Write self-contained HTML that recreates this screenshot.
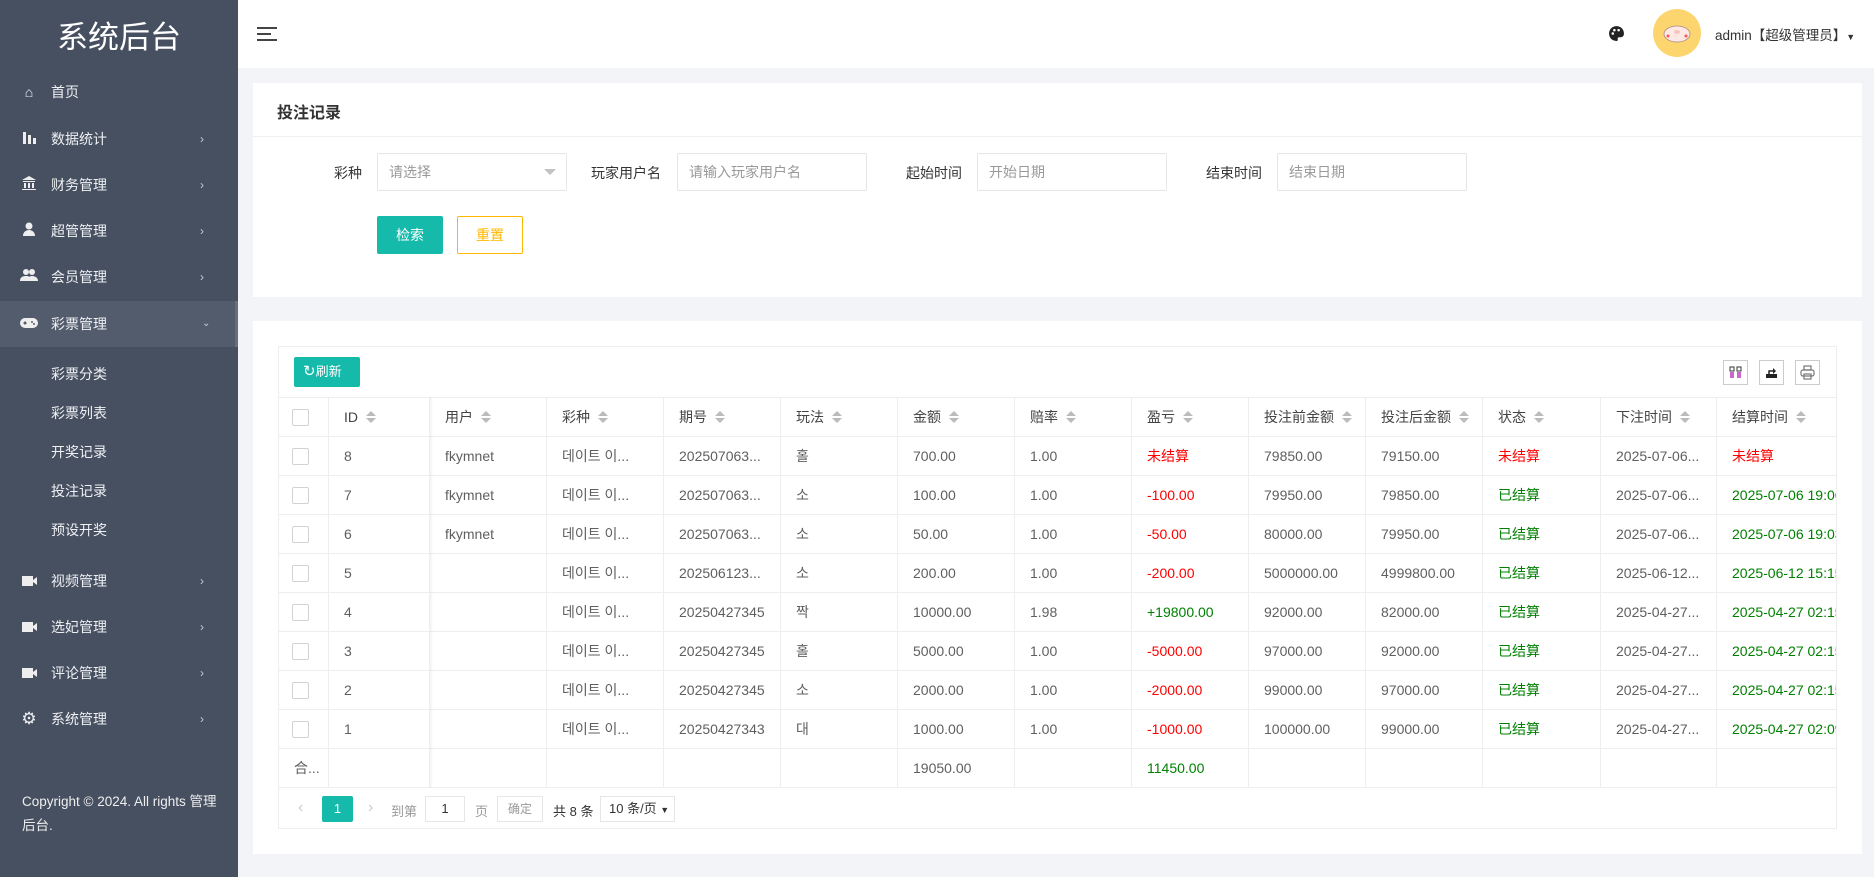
<!DOCTYPE html>
<html><head><meta charset="utf-8"><style>
*{box-sizing:border-box;margin:0;padding:0}
body{width:1874px;height:877px;overflow:hidden;background:#f3f4f8;font-family:"Liberation Sans","Noto Sans CJK SC","Noto Sans CJK KR",sans-serif;font-size:14px;color:#333;position:relative}
.side{position:absolute;left:0;top:0;width:238px;height:877px;background:#475061;color:#fff}
.logo{position:absolute;top:12px;left:0;width:238px;text-align:center;font-size:31px;color:#fff}
.mi{position:absolute;left:0;width:238px;height:46px;line-height:46px;font-size:14px;color:#eef0f3}
.mi .t{position:absolute;left:51px}
.mi .ic{position:absolute;left:19px;top:0;width:20px;text-align:center;font-size:14px}
.mi .ar{position:absolute;left:200px;font-size:12px;color:#ccc}
.act{background:#535c6c}
.sub{position:absolute;left:51px;font-size:14px;color:#eef0f3}
.copy{position:absolute;left:22px;top:790px;font-size:13.5px;line-height:24px;color:#eee;width:200px}
.top{position:absolute;left:238px;top:0;right:0;height:68px;background:#fff}
.card{position:absolute;background:#fff}
.lbl{position:absolute;font-size:14px;color:#333;text-align:right;width:90px;top:163px}
.inp{position:absolute;top:153px;height:38px;border:1px solid #e6e6e6;border-radius:2px;background:#fff;color:#999;font-size:14px;line-height:36px;padding-left:11px}
.btn{position:absolute;top:216px;height:38px;width:66px;border-radius:2px;text-align:center;line-height:38px;font-size:14px}
.tb{position:absolute;left:278px;top:346px;width:1559px;height:483px;border:1px solid #eee;overflow:hidden}
table{border-collapse:collapse;table-layout:fixed;position:absolute;left:-1px;top:50px;width:1598px}
td,th{border:1px solid #eee;height:39px;padding:0 15px;white-space:nowrap;overflow:hidden;font-size:14px;color:#5f5f5f;text-align:left;font-weight:normal}
th{color:#444}
.s{display:inline-block;width:10px;height:14px;vertical-align:middle;margin-left:8px;position:relative}
.s:before{content:"";position:absolute;left:0;top:0;border:5px solid transparent;border-bottom:5px solid #bbb;border-top:0}
.s:after{content:"";position:absolute;left:0;top:7px;border:5px solid transparent;border-top:5px solid #bbb;border-bottom:0}
.cb{display:inline-block;width:17px;height:17px;border:1px solid #d2d2d2;border-radius:2px;vertical-align:middle}
.r{color:#ff0000}.g{color:#008000}
.ib{position:absolute;top:13px;width:25px;height:25px;border:1px solid #ccc;background:#fff}
.pg{position:absolute;font-size:13px;color:#666}
</style></head><body>
<div class="side">
<div class="logo">系统后台</div>
<div class="mi" style="top:69px"><span class="ic">&#8962;</span><span class="t">首页</span></div>
<div class="mi" style="top:116px"><span class="ic"><svg width="14" height="14"><rect x="1" y="2" width="3" height="12" fill="#eee"/><rect x="6" y="5" width="3" height="9" fill="#eee"/><rect x="11" y="8" width="3" height="6" fill="#eee"/></svg></span><span class="t">数据统计</span><span class="ar">&#8250;</span></div>
<div class="mi" style="top:162px"><span class="ic"><svg width="16" height="14"><path d="M1 4L8 0L15 4Z M2 5h12v1H2z M3 7h2v5H3z M7 7h2v5H7z M11 7h2v5h-2z M1 13h14v1H1z" fill="#eee"/></svg></span><span class="t">财务管理</span><span class="ar">&#8250;</span></div>
<div class="mi" style="top:208px"><span class="ic"><svg width="14" height="14"><circle cx="7" cy="4" r="3.5" fill="#eee"/><path d="M1 14c0-4 3-6 6-6s6 2 6 6z" fill="#eee"/></svg></span><span class="t">超管管理</span><span class="ar">&#8250;</span></div>
<div class="mi" style="top:254px"><span class="ic"><svg width="18" height="14"><circle cx="6" cy="4" r="3" fill="#eee"/><circle cx="12" cy="4" r="3" fill="#eee"/><path d="M0 13c0-4 3-5 6-5s6 1 6 5zM8 13c0-4 2-5 4-5s6 1 6 5z" fill="#eee"/></svg></span><span class="t">会员管理</span><span class="ar">&#8250;</span></div>
<div class="mi act" style="top:301px"><span class="ic"><svg width="18" height="12"><rect x="0" y="1" width="18" height="10" rx="5" fill="#eee"/><circle cx="5" cy="6" r="1.5" fill="#535c6c"/><circle cx="12" cy="5" r="1" fill="#535c6c"/><circle cx="14" cy="7" r="1" fill="#535c6c"/></svg></span><span class="t">彩票管理</span><span class="ar" style="left:202px;font-size:10px">&#8964;</span><span style="position:absolute;left:235px;top:0;width:3px;height:46px;background:#666e7c"></span></div>
<div class="sub" style="top:364px">彩票分类</div>
<div class="sub" style="top:403px">彩票列表</div>
<div class="sub" style="top:442px">开奖记录</div>
<div class="sub" style="top:481px">投注记录</div>
<div class="sub" style="top:520px">预设开奖</div>
<div class="mi" style="top:558px"><span class="ic"><svg width="15" height="10"><rect x="0" y="0" width="11" height="10" fill="#eee"/><path d="M11 4L15 1V9L11 6Z" fill="#eee"/></svg></span><span class="t">视频管理</span><span class="ar">&#8250;</span></div>
<div class="mi" style="top:604px"><span class="ic"><svg width="15" height="10"><rect x="0" y="0" width="11" height="10" fill="#eee"/><path d="M11 4L15 1V9L11 6Z" fill="#eee"/></svg></span><span class="t">选妃管理</span><span class="ar">&#8250;</span></div>
<div class="mi" style="top:650px"><span class="ic"><svg width="15" height="10"><rect x="0" y="0" width="11" height="10" fill="#eee"/><path d="M11 4L15 1V9L11 6Z" fill="#eee"/></svg></span><span class="t">评论管理</span><span class="ar">&#8250;</span></div>
<div class="mi" style="top:696px"><span class="ic" style="font-size:17px">&#9881;</span><span class="t">系统管理</span><span class="ar">&#8250;</span></div>
<div class="copy">Copyright © 2024. All rights 管理后台.</div>
</div>

<div class="top">
<svg style="position:absolute;left:19px;top:26px" width="21" height="16"><rect y="1" width="20" height="2" fill="#444"/><rect y="7" width="14" height="2" fill="#444"/><rect y="13" width="20" height="2" fill="#444"/></svg>
<svg style="position:absolute;left:1370px;top:25px" width="17" height="17" viewBox="0 0 16 16"><path d="M8 1C4 1 1 4 1 8s3 7 7 7c1 0 1.5-.7 1.2-1.5-.4-1 .2-2 1.3-2H12c2 0 3-1.5 3-3.5C15 4 12 1 8 1z" fill="#222"/><circle cx="4.5" cy="8" r="1.2" fill="#fff"/><circle cx="6" cy="4.8" r="1.2" fill="#fff"/><circle cx="10" cy="4.8" r="1.2" fill="#fff"/></svg>
<div style="position:absolute;left:1415px;top:9px;width:48px;height:48px;border-radius:50%;background:#fdd56e"></div>
<svg style="position:absolute;left:1425px;top:23px" width="28" height="20"><ellipse cx="14" cy="11" rx="13" ry="8" fill="#fde8e3" stroke="#a88" stroke-width=".8"/><ellipse cx="14" cy="9" rx="3" ry="2" fill="#f6c3c3"/><circle cx="5" cy="13" r="1.5" fill="#f55"/><circle cx="23" cy="13" r="1.5" fill="#f55"/></svg>
<div style="position:absolute;left:1477px;top:24px;font-size:13.5px;color:#333">admin【超级管理员】<span style="font-size:9px">&#9660;</span></div>
</div>

<div class="card" style="left:253px;top:83px;width:1609px;height:214px">
<div style="position:absolute;left:24px;top:16px;font-size:16px;color:#333;font-weight:bold">投注记录</div>
<div style="position:absolute;left:0;top:53px;width:100%;height:1px;background:#f0f0f0"></div>
</div>
<div class="lbl" style="left:272px">彩种</div>
<div class="inp" style="left:377px;width:190px">请选择<span style="position:absolute;right:10px;top:15px;border:6px solid transparent;border-top:6px solid #c2c2c2;border-bottom:0"></span></div>
<div class="lbl" style="left:571px">玩家用户名</div>
<div class="inp" style="left:677px;width:190px">请输入玩家用户名</div>
<div class="lbl" style="left:872px">起始时间</div>
<div class="inp" style="left:977px;width:190px">开始日期</div>
<div class="lbl" style="left:1172px">结束时间</div>
<div class="inp" style="left:1277px;width:190px">结束日期</div>
<div class="btn" style="left:377px;background:#16baaa;color:#fff">检索</div>
<div class="btn" style="left:457px;border:1px solid #ffb800;color:#ffb800;line-height:36px">重置</div>

<div class="card" style="left:253px;top:321px;width:1609px;height:533px"></div>
<div class="tb">
<div style="position:absolute;left:15px;top:10px;width:66px;height:30px;background:#16baaa;border-radius:2px;color:#fff;font-size:13px;line-height:30px;padding-left:9px"><span style="font-size:15px">&#8635;</span>刷新</div>
<div class="ib" style="left:1444px"><svg width="23" height="23"><g stroke="#555" fill="none" stroke-width="1.2"><rect x="6" y="6" width="4" height="4"/><rect x="13" y="6" width="4" height="4"/></g><g stroke="#a0a" stroke-width="1.2"><path d="M7 11v6M9 11v6M14 11v6M16 11v6"/></g></svg></div>
<div class="ib" style="left:1480px"><svg width="23" height="23"><path d="M6 13h11v4H6z" fill="#222"/><path d="M9 13v-3h5" stroke="#222" fill="none" stroke-width="1.5"/><path d="M13 7l3 3-3 3z" fill="#222"/></svg></div>
<div class="ib" style="left:1516px"><svg width="23" height="23"><g stroke="#777" fill="none" stroke-width="1.2"><rect x="8" y="5" width="7" height="4"/><rect x="5" y="9" width="13" height="6" rx="2"/><rect x="8" y="13" width="7" height="5"/></g></svg></div>
<table>
<colgroup><col style="width:50px"><col style="width:101px"><col style="width:117px"><col style="width:117px"><col style="width:117px"><col style="width:117px"><col style="width:117px"><col style="width:117px"><col style="width:117px"><col style="width:117px"><col style="width:117px"><col style="width:118px"><col style="width:116px"><col style="width:160px"></colgroup>
<tr><th style="padding:0 13px"><span class="cb"></span></th><th>ID<span class="s"></span></th><th>用户<span class="s"></span></th><th>彩种<span class="s"></span></th><th>期号<span class="s"></span></th><th>玩法<span class="s"></span></th><th>金额<span class="s"></span></th><th>赔率<span class="s"></span></th><th>盈亏<span class="s"></span></th><th>投注前金额<span class="s"></span></th><th>投注后金额<span class="s"></span></th><th>状态<span class="s"></span></th><th>下注时间<span class="s"></span></th><th>结算时间<span class="s"></span></th></tr>
<tr><td style="padding:0 13px"><span class="cb"></span></td><td>8</td><td>fkymnet</td><td>데이트 이...</td><td>202507063...</td><td>홀</td><td>700.00</td><td>1.00</td><td class="r">未结算</td><td>79850.00</td><td>79150.00</td><td class="r">未结算</td><td>2025-07-06...</td><td class="r">未结算</td></tr>
<tr><td style="padding:0 13px"><span class="cb"></span></td><td>7</td><td>fkymnet</td><td>데이트 이...</td><td>202507063...</td><td>소</td><td>100.00</td><td>1.00</td><td class="r">-100.00</td><td>79950.00</td><td>79850.00</td><td class="g">已结算</td><td>2025-07-06...</td><td class="g">2025-07-06 19:06</td></tr>
<tr><td style="padding:0 13px"><span class="cb"></span></td><td>6</td><td>fkymnet</td><td>데이트 이...</td><td>202507063...</td><td>소</td><td>50.00</td><td>1.00</td><td class="r">-50.00</td><td>80000.00</td><td>79950.00</td><td class="g">已结算</td><td>2025-07-06...</td><td class="g">2025-07-06 19:03</td></tr>
<tr><td style="padding:0 13px"><span class="cb"></span></td><td>5</td><td></td><td>데이트 이...</td><td>202506123...</td><td>소</td><td>200.00</td><td>1.00</td><td class="r">-200.00</td><td>5000000.00</td><td>4999800.00</td><td class="g">已结算</td><td>2025-06-12...</td><td class="g">2025-06-12 15:15</td></tr>
<tr><td style="padding:0 13px"><span class="cb"></span></td><td>4</td><td></td><td>데이트 이...</td><td>20250427345</td><td>짝</td><td>10000.00</td><td>1.98</td><td class="g">+19800.00</td><td>92000.00</td><td>82000.00</td><td class="g">已结算</td><td>2025-04-27...</td><td class="g">2025-04-27 02:15</td></tr>
<tr><td style="padding:0 13px"><span class="cb"></span></td><td>3</td><td></td><td>데이트 이...</td><td>20250427345</td><td>홀</td><td>5000.00</td><td>1.00</td><td class="r">-5000.00</td><td>97000.00</td><td>92000.00</td><td class="g">已结算</td><td>2025-04-27...</td><td class="g">2025-04-27 02:15</td></tr>
<tr><td style="padding:0 13px"><span class="cb"></span></td><td>2</td><td></td><td>데이트 이...</td><td>20250427345</td><td>소</td><td>2000.00</td><td>1.00</td><td class="r">-2000.00</td><td>99000.00</td><td>97000.00</td><td class="g">已结算</td><td>2025-04-27...</td><td class="g">2025-04-27 02:15</td></tr>
<tr><td style="padding:0 13px"><span class="cb"></span></td><td>1</td><td></td><td>데이트 이...</td><td>20250427343</td><td>대</td><td>1000.00</td><td>1.00</td><td class="r">-1000.00</td><td>100000.00</td><td>99000.00</td><td class="g">已结算</td><td>2025-04-27...</td><td class="g">2025-04-27 02:09</td></tr>
<tr><td style="padding:0 0 0 15px">合...</td><td></td><td></td><td></td><td></td><td></td><td>19050.00</td><td></td><td class="g">11450.00</td><td></td><td></td><td></td><td></td><td></td></tr>
</table>
<div style="position:absolute;left:151px;top:50px;width:3px;height:391px;background:linear-gradient(to right,rgba(0,0,0,.05),rgba(0,0,0,0))"></div>
</div>
<div class="pg" style="left:298px;top:799px;color:#ccc;font-size:16px">&#8249;</div>
<div style="position:absolute;left:322px;top:796px;width:31px;height:26px;background:#16baaa;border-radius:2px;color:#fff;text-align:center;line-height:26px;font-size:13px">1</div>
<div class="pg" style="left:368px;top:799px;color:#ccc;font-size:16px">&#8250;</div>
<div class="pg" style="left:391px;top:801px;color:#999">到第</div>
<div style="position:absolute;left:425px;top:796px;width:40px;height:26px;border:1px solid #e6e6e6;text-align:center;line-height:24px;font-size:13px;color:#333">1</div>
<div class="pg" style="left:475px;top:801px;color:#999">页</div>
<div style="position:absolute;left:497px;top:796px;width:46px;height:26px;border:1px solid #e6e6e6;text-align:center;line-height:24px;font-size:12px;color:#999">确定</div>
<div class="pg" style="left:553px;top:801px;color:#333">共 8 条</div>
<div style="position:absolute;left:600px;top:796px;width:75px;height:26px;border:1px solid #e6e6e6;line-height:24px;font-size:13px;color:#333;padding-left:8px">10 条/页 <span style="font-size:9px">&#9660;</span></div>
</body></html>
